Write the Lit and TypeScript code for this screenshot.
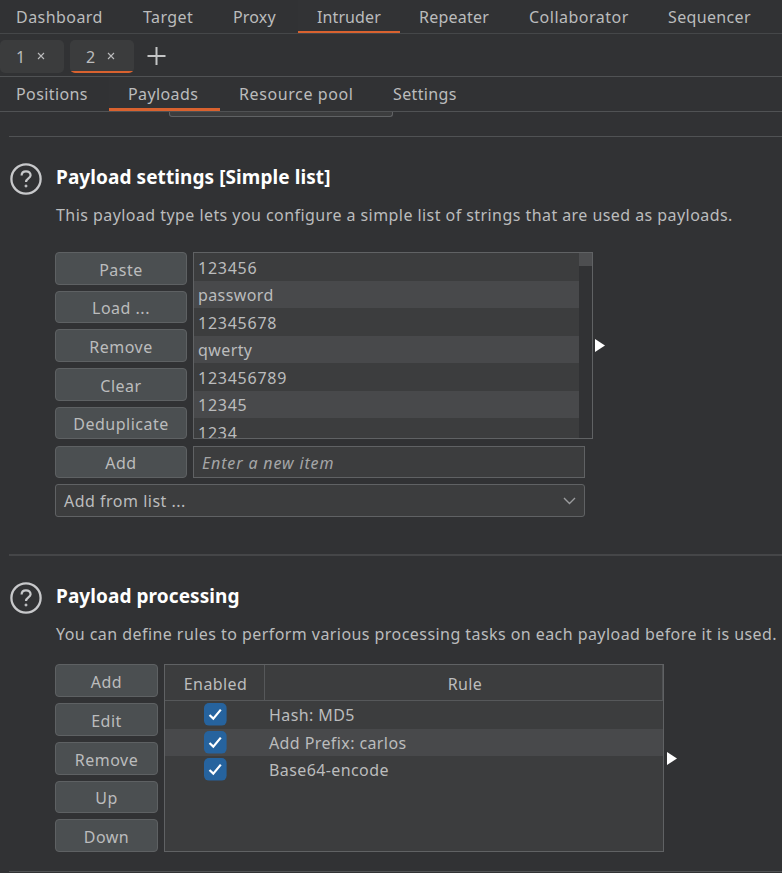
import { LitElement, html, css, svg } from "lit";
import { customElement } from "lit/decorators.js";
import { classMap } from "lit/directives/class-map.js";

interface Tab { label: string; width: number; pad: number; track: number; on?: boolean }

const TOOLS: Tab[] = [
  { label: "Dashboard", width: 127, pad: 16, track: 0.45 },
  { label: "Target", width: 90, pad: 16, track: 0.4 },
  { label: "Proxy", width: 81, pad: 16, track: 0.15 },
  { label: "Intruder", width: 102, pad: 19, track: 0.1, on: true },
  { label: "Repeater", width: 112, pad: 19, track: 0.25 },
  { label: "Collaborator", width: 139, pad: 17, track: 0.5 },
  { label: "Sequencer", width: 122, pad: 17, track: 0.35 },
];
const PAGES: Tab[] = [
  { label: "Positions", width: 109, pad: 16, track: 0.4 },
  { label: "Payloads", width: 111, pad: 19, track: 0.4, on: true },
  { label: "Resource pool", width: 152, pad: 19, track: 0.6 },
  { label: "Settings", width: 105, pad: 21, track: 0.35 },
];
const ITEMS = ["123456", "password", "12345678", "qwerty", "123456789", "12345", "1234"];
const RULES = ["Hash: MD5", "Add Prefix: carlos", "Base64-encode"];

const cross = svg`<path d="M1 1L7 7M7 1L1 7"/>`;

@customElement("app-root")
export class AppRoot extends LitElement {
  static styles = css`
    :host {
      display: flex; flex-direction: column; box-sizing: border-box;
      width: 782px; height: 873px; overflow: hidden;
      background: #313234; color: #bbbcbd;
      font: 16px/22px "Noto Sans", "Open Sans", sans-serif;
      letter-spacing: .4px; white-space: nowrap;
    }
    * { box-sizing: border-box; }
    svg { display: block; fill: none; flex: none; }
    .bar { display: flex; flex: none; border-bottom: 1px solid #505254; }
    .tools { height: 34px; border-bottom-color: #454749; }
    .pages { height: 35px; }
    .tab { flex: none; padding-top: 6px; }
    .tab.on { border-bottom: 2px solid #d9622f; background: #323335; }
    .pages .tab.on { border-bottom-width: 3px; }
    .attacks { height: 43px; padding-top: 6px; }
    .attack {
      width: 64px; height: 33px; border-radius: 5px; background: #3b3c3d;
      display: flex; align-items: center; padding-left: 16px; gap: 11px;
      margin-right: 6px;
    }
    .attack.on { background: linear-gradient(#d9622f, #d9622f) center bottom / 62px 2px no-repeat #3b3c3d; margin-right: 5px; }
    .attack svg { stroke: #bbbcbd; stroke-width: 1.1; margin-top: -1px; }
    .plus { stroke: #c4c5c6; stroke-width: 2; margin: 7px 0 0 8px; }
    .peek {
      width: 224px; height: 5px; margin-left: 169px; flex: none;
      border: 1px solid #606264; border-top: 0; border-radius: 0 0 3px 3px; background: #3c3d3e;
    }
    .rule { flex: none; height: 1px; margin-left: 9px; background: #505254; }
    .r1 { margin-top: 19px; }
    .r2 { height: 2px; background: #454648; }
    .section { flex: none; display: grid; grid-template-columns: 56px 1fr; }
    .first { height: 417px; grid-template-rows: 115px 1fr; }
    .second { height: 315px; grid-template-rows: 108px 1fr; }
    .help { margin: 26px 0 0 10px; stroke: #c8c9cb; }
    .head { padding-top: 28px; }
    h2 { margin: 0; font: bold 19px/24px "Noto Sans", sans-serif; color: #fff; letter-spacing: .08px; }
    .desc { margin: 15px 0 0; line-height: 22px; letter-spacing: .44px; }
    .body { grid-column: 1 / 3; padding-left: 55px; }
    .btn {
      display: flex; align-items: center; justify-content: center;
      border: 1px solid #5e6163; border-radius: 4px; background: #4b4f51;
      padding: 2px 0 0; letter-spacing: .5px;
    }
    .simple { display: grid; grid-template-columns: 138px 392px 10px 10px;
      grid-template-rows: 187px 32px 32px; row-gap: 7px; }
    .stack { display: grid; row-gap: 6px; }
    .s1 { width: 132px; grid-template-rows: 33px 32px 33px 33px 32px; }
    .s2 { width: 103px; grid-template-rows: 33px 33px 33px 32px 33px; }
    .add { width: 132px; }
    .list { grid-column: 2 / 3; width: 400px; height: 187px; border: 1px solid #606264; display: flex; }
    .items { width: 385px; overflow: hidden; background: #3c3d3e; }
    .item { height: 27.5px; padding: 3.5px 0 0 4px; line-height: 22px; letter-spacing: .75px; }
    .item.alt { background: #48494b; letter-spacing: .4px; }
    .item:nth-child(6) { letter-spacing: .75px; }
    .scroll { flex: 1; }
    .thumb { height: 13px; background: #4d4e50; }
    .more { fill: #fff; align-self: center; justify-self: start; }
    .field { border: 1px solid #606264; background: #3c3d3e; display: flex; align-items: center; }
    .new { padding: 1px 0 0 8px; font-style: italic; color: #a5a6a7; letter-spacing: .85px; }
    .combo { grid-column: 1 / 3; border-radius: 3px; padding: 1px 8px 0; justify-content: space-between; margin-top: -1px; letter-spacing: .5px; }
    .combo svg { stroke: #9b9c9e; stroke-width: 1.4; }
    .proc { display: flex; height: 188px; }
    .table { width: 500px; margin-left: 6px; border: 1px solid #606264; background: #3c3d3e; }
    .thead, .row { display: grid; grid-template-columns: 99px 1fr; }
    .thead { height: 36px; border-bottom: 1px solid #56585a; border-right: 1px solid #505254; text-align: center; }
    .th { padding: 8px 0 0 2px; }
    .th + .th { border-left: 1px solid #56585a; padding-left: 3px; }
    .row { height: 27.5px; align-items: center; }
    .row.alt { background: #48494b; }
    .check { margin-left: 39px; }
    .box { fill: #26639e; }
    .tick { stroke: #fff; stroke-width: 2.2; }
    .cell { padding: 1px 0 0 5px; }
    .proc .more { margin: 0 0 0 3px; }
  `;

  private tabs(cls: string, tabs: Tab[]) {
    return html`<nav class="bar ${cls}">
      ${tabs.map((t) => html`<div class=${classMap({ tab: true, on: !!t.on })}
        style="width:${t.width}px;padding-left:${t.pad}px;letter-spacing:${t.track}px">${t.label}</div>`)}
    </nav>`;
  }

  private head(title: string, text: string) {
    return html`
      <svg class="help" width="32" height="32" viewBox="0 0 32 32">
        <circle cx="16" cy="16" r="14.6" stroke-width="2.3"/>
        <path d="M11.6 12.4C11.6 9.9 13.4 8.3 16 8.3C18.7 8.3 20.6 10 20.6 12.3C20.6 15.3 16 15.5 16 18.9" stroke-width="2.2"/>
        <circle cx="16" cy="23" r="1.1" fill="#c8c9cb" stroke-width=".8"/>
      </svg>
      <div class="head"><h2>${title}</h2><p class="desc">${text}</p></div>`;
  }

  private more() {
    return html`<svg class="more" width="10" height="13" viewBox="0 0 10 13"><path d="M0 0L10 6.5L0 13Z"/></svg>`;
  }

  private buttons(cls: string, labels: string[]) {
    return html`<div class="stack ${cls}">${labels.map((l) => html`<div class="btn">${l}</div>`)}</div>`;
  }

  render() {
    return html`
      ${this.tabs("tools", TOOLS)}
      <div class="bar attacks">
        ${["1", "2"].map((n) => html`<div class=${classMap({ attack: true, on: n === "2" })}>
          ${n}<svg width="8" height="8" viewBox="0 0 8 8">${cross}</svg></div>`)}
        <svg class="plus" width="19" height="18" viewBox="0 0 19 18"><path d="M.5 9H18.5M9.5 0V18"/></svg>
      </div>
      ${this.tabs("pages", PAGES)}
      <div class="peek"></div>
      <div class="rule r1"></div>
      <section class="section first">
        ${this.head("Payload settings [Simple list]", "This payload type lets you configure a simple list of strings that are used as payloads.")}
        <div class="body simple">
          ${this.buttons("s1", ["Paste", "Load ...", "Remove", "Clear", "Deduplicate"])}
          <div class="list">
            <div class="items">${ITEMS.map((t, i) => html`<div class=${classMap({ item: true, alt: i % 2 === 1 })}>${t}</div>`)}</div>
            <div class="scroll"><div class="thumb"></div></div>
          </div>
          <span></span>
          ${this.more()}
          <div class="btn add">Add</div>
          <div class="field new">Enter a new item</div>
          <span></span><span></span>
          <div class="field combo">Add from list ...
            <svg width="13" height="8" viewBox="0 0 13 8"><path d="M1 1L6.5 6.5L12 1"/></svg>
          </div>
        </div>
      </section>
      <div class="rule r2"></div>
      <section class="section second">
        ${this.head("Payload processing", "You can define rules to perform various processing tasks on each payload before it is used.")}
        <div class="body proc">
          ${this.buttons("s2", ["Add", "Edit", "Remove", "Up", "Down"])}
          <div class="table">
            <div class="thead"><div class="th">Enabled</div><div class="th">Rule</div></div>
            ${RULES.map((r, i) => html`<div class=${classMap({ row: true, alt: i % 2 === 1 })}>
              <svg class="check" width="23" height="23" viewBox="0 0 23 23">
                <rect class="box" width="22.6" height="22.6" rx="5"/>
                <path class="tick" d="M5.5 12L9.3 15.6L16.8 6.6"/>
              </svg>
              <div class="cell">${r}</div></div>`)}
          </div>
          ${this.more()}
        </div>
      </section>
      <div class="rule"></div>`;
  }
}
